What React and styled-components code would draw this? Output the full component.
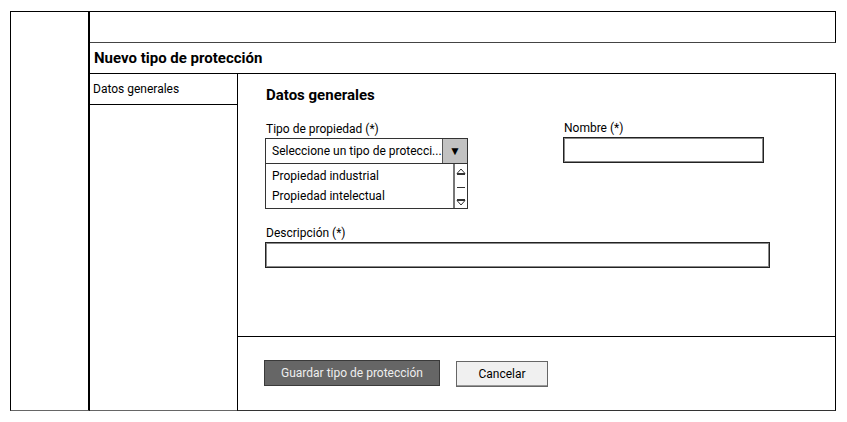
import styled, { createGlobalStyle } from 'styled-components';

const GlobalStyle = createGlobalStyle`
  body {
    margin: 0;
    background: #fff;
    font-family: Roboto, "Liberation Sans", sans-serif;
    color: #000;
  }
  * {
    box-sizing: border-box;
  }
`;

const Shell = styled.div`
  margin: 11px 0 0 10px;
  width: 826px;
  height: 400px;
  display: flex;
`;

const SideRail = styled.aside`
  width: 80px;
  border: 1px solid #000;
  border-right: 2px solid #000;
  border-bottom-color: #666;
`;

const Main = styled.main`
  flex: 1;
  display: flex;
  flex-direction: column;
`;

const TopBar = styled.header`
  height: 32px;
  border: 1px solid #000;
  border-left: none;
  border-bottom-color: #444;
`;

const TitleRow = styled.div`
  height: 30px;
  display: flex;
  align-items: center;
  padding-left: 4px;
  font-size: 15px;
  font-weight: 700;
`;

const Body = styled.div`
  flex: 1;
  display: flex;
`;

const TabColumn = styled.nav`
  width: 147px;
  border-bottom: 1px solid #666;
`;

const Tab = styled.div`
  height: 32px;
  border-top: 1px solid #000;
  border-bottom: 1px solid #000;
  display: flex;
  align-items: center;
  padding: 0 0 1px 3px;
  font-size: 12px;
`;

const Content = styled.section`
  flex: 1;
  display: flex;
  flex-direction: column;
  border: 1px solid #000;
  border-bottom-color: #333;
`;

const Form = styled.div`
  height: 262px;
  padding: 12px 0 0 27px;
`;

const Heading = styled.h2`
  margin: 0 0 18px 1px;
  font-size: 15px;
  line-height: 18px;
  font-weight: 700;
`;

const Row = styled.div`
  display: flex;
  gap: 95px;
  align-items: flex-start;
`;

const Field = styled.div`
  width: ${(p) => p.$width}px;
  margin-top: ${(p) => p.$lift || 0}px;
`;

const Label = styled.div`
  font-size: 12px;
  line-height: 14px;
  padding-left: 1px;
  margin-bottom: ${(p) => p.$gap || 1}px;
`;

const TextBox = styled.div`
  height: ${(p) => p.$h || 26}px;
  border: 1px solid #222;
  box-shadow: inset 0 0 0 1px #8a8a8a;
  background: #fff;
`;

const Select = styled.div`
  height: 26px;
  display: flex;
  border: 1px solid #333;
  background: #fff;
`;

const SelectText = styled.div`
  flex: 1;
  padding-left: 6px;
  font-size: 12px;
  line-height: 24px;
  white-space: nowrap;
  overflow: hidden;
`;

const SelectButton = styled.div`
  width: 25px;
  background: #c2c2c2;
  border-left: 1px solid #555;
  display: flex;
  align-items: center;
  justify-content: center;
  font-size: 12px;
`;

const ListBox = styled.div`
  height: 45px;
  display: flex;
  border: 1px solid #333;
  border-top: none;
  background: #fff;
`;

const Items = styled.div`
  flex: 1;
  padding: 2px 0 0 6px;
`;

const Item = styled.div`
  font-size: 12px;
  line-height: 20px;
`;

const Scroll = styled.div`
  width: 14px;
  border-left: 2px solid #777;
  display: flex;
  flex-direction: column;
  align-items: center;
  justify-content: space-between;
  padding: 4px 0 2px;
`;

const Spacer = styled.div`
  height: ${(p) => p.$h}px;
`;

const Footer = styled.div`
  flex: 1;
  border-top: 1px solid #000;
  display: flex;
  align-items: flex-start;
  gap: 16px;
  padding: 23px 0 0 26px;
`;

const Button = styled.button`
  height: 26px;
  width: ${(p) => p.$width}px;
  margin-top: ${(p) => (p.$primary ? 0 : 1)}px;
  padding: 0;
  font-family: Roboto, "Liberation Sans", sans-serif;
  font-size: 12px;
  border: 1px solid ${(p) => (p.$primary ? '#3a3a3a' : '#666')};
  background: ${(p) => (p.$primary ? '#666' : '#f0f0f0')};
  color: ${(p) => (p.$primary ? '#eee' : '#000')};
  box-shadow: ${(p) => (p.$primary ? 'none' : 'inset 0 -1px 0 #999')};
`;

const Arrow = ({ down }) => (
  <svg width="10" height="7" viewBox="0 0 10 7">
    <path
      d={down ? 'M1 1.5 L9 1.5 L5 6 Z M1 0.5 L9 0.5' : 'M1 5.5 L9 5.5 L5 1 Z M1 6.5 L9 6.5'}
      fill="none"
      stroke="#333"
      strokeWidth="1"
    />
  </svg>
);

const Dash = () => (
  <svg width="10" height="3" viewBox="0 0 10 3">
    <path d="M1 1.5 L9 1.5" stroke="#333" strokeWidth="1" />
  </svg>
);

export default function App() {
  return (
    <>
      <GlobalStyle />
      <Shell>
        <SideRail />
        <Main>
          <TopBar />
          <TitleRow>Nuevo tipo de protección</TitleRow>
          <Body>
            <TabColumn>
              <Tab>Datos generales</Tab>
            </TabColumn>
            <Content>
              <Form>
                <Heading>Datos generales</Heading>
                <Row>
                  <Field $width={203}>
                    <Label $gap={2}>Tipo de propiedad (*)</Label>
                    <Select>
                      <SelectText>Seleccione un tipo de protecci...</SelectText>
                      <SelectButton>▼</SelectButton>
                    </Select>
                    <ListBox>
                      <Items>
                        <Item>Propiedad industrial</Item>
                        <Item>Propiedad intelectual</Item>
                      </Items>
                      <Scroll>
                        <Arrow />
                        <Dash />
                        <Arrow down />
                      </Scroll>
                    </ListBox>
                  </Field>
                  <Field $width={201} $lift={-1}>
                    <Label $gap={2}>Nombre (*)</Label>
                    <TextBox />
                  </Field>
                </Row>
                <Spacer $h={17} />
                <Field $width={505}>
                  <Label $gap={2}>Descripción (*)</Label>
                  <TextBox $h={26} />
                </Field>
              </Form>
              <Footer>
                <Button $primary $width={176}>Guardar tipo de protección</Button>
                <Button $width={92}>Cancelar</Button>
              </Footer>
            </Content>
          </Body>
        </Main>
      </Shell>
    </>
  );
}
